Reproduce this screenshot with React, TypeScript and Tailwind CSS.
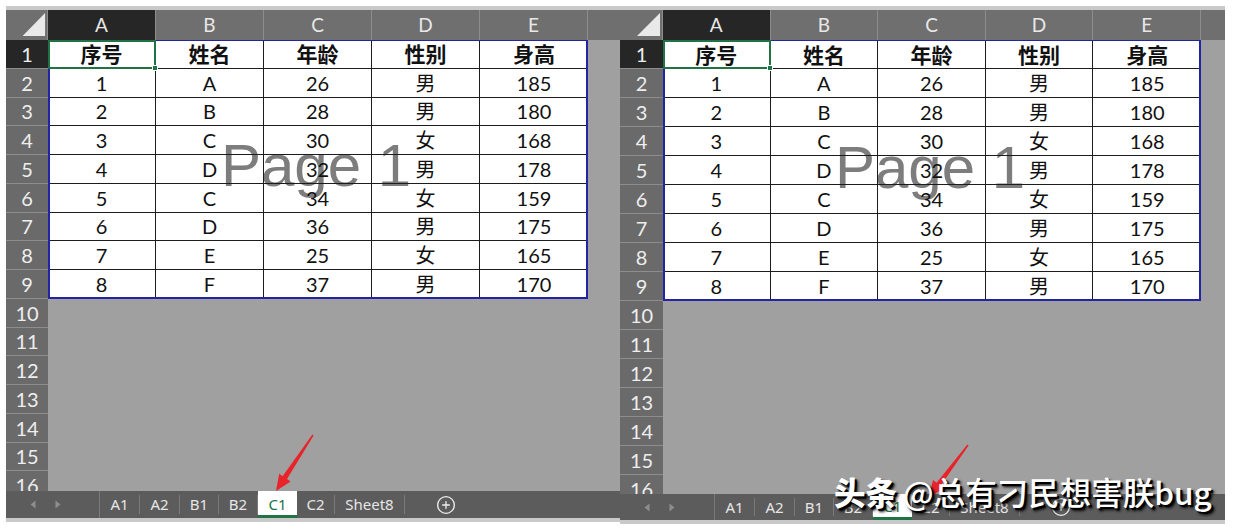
import { CirclePlus } from "lucide-react";

type Row = [string, string, string, string, string];

const header: Row = ["序号", "姓名", "年龄", "性别", "身高"];
const data: Row[] = [
  ["1", "A", "26", "男", "185"],
  ["2", "B", "28", "男", "180"],
  ["3", "C", "30", "女", "168"],
  ["4", "D", "32", "男", "178"],
  ["5", "C", "34", "女", "159"],
  ["6", "D", "36", "男", "175"],
  ["7", "E", "25", "女", "165"],
  ["8", "F", "37", "男", "170"],
];
const cols = ["A", "B", "C", "D", "E"];
const rowNums = Array.from({ length: 16 }, (_, i) => i + 1);

const tabs = [
  { name: "A1", w: "w-[40px]" },
  { name: "A2", w: "w-[40px]" },
  { name: "B1", w: "w-[39px]" },
  { name: "B2", w: "w-[39px]" },
  { name: "C1", w: "w-[39px]", active: true },
  { name: "C2", w: "w-[38px]" },
  { name: "Sheet8", w: "w-[70px]" },
];

type SheetProps = {
  size: string;
  headW: string;
  tableW: string;
  rowH: string;
  tabH: string;
  navW: string;
};

function Sheet({ size, headW, tableW, rowH, tabH, navW }: SheetProps) {
  const cellFont = { fontFamily: 'Lato, "Noto Sans CJK SC", sans-serif' };

  return (
    <div className={`flex shrink-0 flex-col ${size}`}>
      <div className="h-[4px] bg-[#c9c9c9]" />

      {/* grid area */}
      <div className="flex min-h-0 flex-1 flex-col overflow-hidden bg-[#a0a0a0]" style={cellFont}>
        <div className="flex h-[30px] shrink-0 bg-[#6f6f6f] text-[19px] text-[#e8e8e8]">
          <div className={`relative shrink-0 border-r border-[#8c8c8c] ${headW}`}>
            <svg className="absolute inset-0 h-full w-full" viewBox="0 0 42 30" preserveAspectRatio="none">
              <polygon points="17,26 40,3 40,26" fill="#e9e9e9" />
            </svg>
          </div>
          <div className={`grid shrink-0 grid-cols-5 ${tableW}`}>
            {cols.map((c, i) => (
              <div
                key={c}
                className={`flex items-center justify-center border-r border-[#8c8c8c] ${i === 0 ? "bg-[#262626]" : ""}`}
              >
                {c}
              </div>
            ))}
          </div>
          <div className="flex-1" />
        </div>

        <div className="flex min-h-0 flex-1">
          <div className={`flex shrink-0 flex-col bg-[#6a6a6a] text-[20px] text-[#eeeeee] ${headW}`}>
            {rowNums.map((n) => (
              <div
                key={n}
                className={`flex shrink-0 items-center justify-center border-b border-[#8e8e8e] leading-none ${rowH} ${n === 1 ? "bg-[#262626]" : ""}`}
              >
                {n}
              </div>
            ))}
          </div>

          <div className="flex-1">
            <div className={`relative bg-white text-[20px] text-[#111111] ${tableW}`}>
              <div className="absolute inset-0 flex items-center justify-center pr-[4px] pb-[6px]">
                <span
                  className="text-[60px] leading-none text-[#7d7d7d]"
                  style={{ fontFamily: '"Liberation Sans", Arial, sans-serif' }}
                >
                  Page 1
                </span>
              </div>

              <div className="relative grid grid-cols-5">
                {[header, ...data].map((row, r) =>
                  row.map((v, c) => (
                    <div
                      key={`${r}-${c}`}
                      className={`flex items-center justify-center border-b border-[#1c1c1c] leading-none ${rowH} ${c < 4 ? "border-r" : ""} ${r === 0 ? "text-[21px] font-bold" : ""}`}
                    >
                      {v}
                    </div>
                  )),
                )}
              </div>

              <div className="pointer-events-none absolute inset-0 border-x-2 border-b-2 border-t border-[#2323a6]" />
              <div className={`pointer-events-none absolute top-0 left-0 w-1/5 border-2 border-[#217346] ${rowH}`}>
                <div className="absolute -right-[4px] -bottom-[4px] h-[6px] w-[6px] border border-white bg-[#217346]" />
              </div>
            </div>
          </div>
        </div>
      </div>

      {/* sheet tabs */}
      <div
        className={`flex shrink-0 items-center bg-[#5c5c5c] text-[15px] text-[#e6e6e6] ${tabH}`}
        style={{ fontFamily: '"Noto Sans", "Open Sans", sans-serif' }}
      >
        <div className={`flex h-full shrink-0 items-center gap-[19px] border-r border-[#7a7a7a] pl-[24px] ${navW}`}>
          <svg width="6" height="9" viewBox="0 0 6 9">
            <polygon points="5.5,0.5 0.5,4.5 5.5,8.5" fill="#8d8d8d" />
          </svg>
          <svg width="6" height="9" viewBox="0 0 6 9">
            <polygon points="0.5,0.5 5.5,4.5 0.5,8.5" fill="#8d8d8d" />
          </svg>
        </div>
        {tabs.map((t) =>
          t.active ? (
            <div
              key={t.name}
              className={`flex h-full shrink-0 items-center justify-center border-b-[3px] border-[#217346] bg-white pt-[2px] text-[#217346] ${t.w}`}
            >
              {t.name}
            </div>
          ) : (
            <div key={t.name} className={`flex h-full shrink-0 items-center py-[4px] ${t.w}`}>
              <div className="flex h-full w-full items-center justify-center border-r border-[#7a7a7a]">
                {t.name}
              </div>
            </div>
          ),
        )}
        <CirclePlus className="ml-[31px] shrink-0" size={20} strokeWidth={1.6} color="#eeeeee" />
      </div>
      <div className="h-[4px] shrink-0 bg-[#c9c9c9]" />
    </div>
  );
}

export default function App() {
  return (
    <div className="relative h-[531px] w-[1233px] overflow-hidden bg-white">
      <div className="flex pt-[6px] pl-[6px]">
        <Sheet
          size="h-[516px] w-[614px]"
          headW="w-[42px]"
          tableW="w-[540px]"
          rowH="h-[28.75px]"
          tabH="h-[27px]"
          navW="w-[94px]"
        />
        <Sheet
          size="h-[518px] w-[605px]"
          headW="w-[43px]"
          tableW="w-[538px]"
          rowH="h-[29px]"
          tabH="h-[26px]"
          navW="w-[95px]"
        />
      </div>

      <svg className="pointer-events-none absolute inset-0" width="1233" height="531" viewBox="0 0 1233 531">
        <polygon
          points="313.6,435.4 287,479 290.6,481.4 276,491 279.2,473.8 282.6,476.2 312.4,434.6"
          fill="#e8232a"
        />
        <polygon
          points="968.6,445.5 940.6,485.7 944.2,488.4 929,497 933,480 936.6,482.7 967.4,444.5"
          fill="#e8232a"
        />
      </svg>

      <div
        className="pointer-events-none absolute top-[476px] left-[834px] flex items-baseline whitespace-nowrap text-[31.5px] leading-none text-white [text-shadow:2px_2px_0_#000,3px_3px_3px_#000]"
        style={{ fontFamily: '"Noto Sans CJK SC", "Noto Sans", sans-serif' }}
      >
        <span className="font-black">头条</span>
        <span className="ml-[6px] font-medium">@总有刁民想害朕bug</span>
      </div>
    </div>
  );
}
